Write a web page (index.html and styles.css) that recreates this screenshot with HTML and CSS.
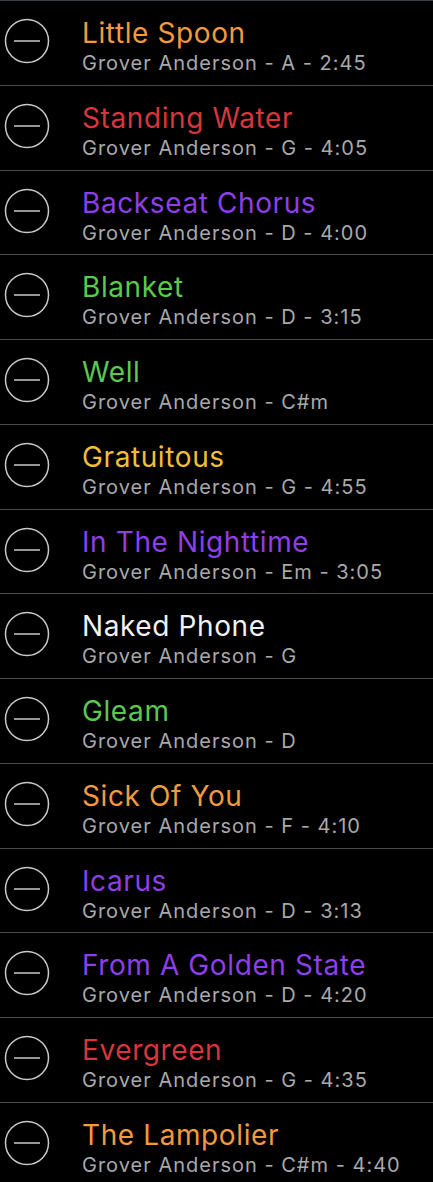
FILE: index.html
```html
<!DOCTYPE html>
<html lang="en">
<head>
    <meta charset="UTF-8">
    <meta name="viewport" content="width=device-width, initial-scale=1.0">
    <title>Setlist</title>
    <link rel="stylesheet" href="styles.css">
</head>
<body>
    <ul class="lista">
        <li class="linha"><svg class="remover" viewBox="0 0 46 46"><circle cx="23" cy="23" r="21.5"/><line x1="10" y1="23" x2="36" y2="23"/></svg><div class="info"><span class="titulo laranja">Little Spoon</span><span class="detalhe">Grover Anderson - A - 2:45</span></div></li>
        <li class="linha"><svg class="remover" viewBox="0 0 46 46"><circle cx="23" cy="23" r="21.5"/><line x1="10" y1="23" x2="36" y2="23"/></svg><div class="info"><span class="titulo vermelho">Standing Water</span><span class="detalhe">Grover Anderson - G - 4:05</span></div></li>
        <li class="linha"><svg class="remover" viewBox="0 0 46 46"><circle cx="23" cy="23" r="21.5"/><line x1="10" y1="23" x2="36" y2="23"/></svg><div class="info"><span class="titulo roxo">Backseat Chorus</span><span class="detalhe">Grover Anderson - D - 4:00</span></div></li>
        <li class="linha"><svg class="remover" viewBox="0 0 46 46"><circle cx="23" cy="23" r="21.5"/><line x1="10" y1="23" x2="36" y2="23"/></svg><div class="info"><span class="titulo verde">Blanket</span><span class="detalhe">Grover Anderson - D - 3:15</span></div></li>
        <li class="linha"><svg class="remover" viewBox="0 0 46 46"><circle cx="23" cy="23" r="21.5"/><line x1="10" y1="23" x2="36" y2="23"/></svg><div class="info"><span class="titulo verde">Well</span><span class="detalhe">Grover Anderson - C#m</span></div></li>
        <li class="linha"><svg class="remover" viewBox="0 0 46 46"><circle cx="23" cy="23" r="21.5"/><line x1="10" y1="23" x2="36" y2="23"/></svg><div class="info"><span class="titulo amarelo">Gratuitous</span><span class="detalhe">Grover Anderson - G - 4:55</span></div></li>
        <li class="linha"><svg class="remover" viewBox="0 0 46 46"><circle cx="23" cy="23" r="21.5"/><line x1="10" y1="23" x2="36" y2="23"/></svg><div class="info"><span class="titulo roxo">In The Nighttime</span><span class="detalhe">Grover Anderson - Em - 3:05</span></div></li>
        <li class="linha"><svg class="remover" viewBox="0 0 46 46"><circle cx="23" cy="23" r="21.5"/><line x1="10" y1="23" x2="36" y2="23"/></svg><div class="info"><span class="titulo branco">Naked Phone</span><span class="detalhe">Grover Anderson - G</span></div></li>
        <li class="linha"><svg class="remover" viewBox="0 0 46 46"><circle cx="23" cy="23" r="21.5"/><line x1="10" y1="23" x2="36" y2="23"/></svg><div class="info"><span class="titulo verde">Gleam</span><span class="detalhe">Grover Anderson - D</span></div></li>
        <li class="linha"><svg class="remover" viewBox="0 0 46 46"><circle cx="23" cy="23" r="21.5"/><line x1="10" y1="23" x2="36" y2="23"/></svg><div class="info"><span class="titulo laranja">Sick Of You</span><span class="detalhe">Grover Anderson - F - 4:10</span></div></li>
        <li class="linha"><svg class="remover" viewBox="0 0 46 46"><circle cx="23" cy="23" r="21.5"/><line x1="10" y1="23" x2="36" y2="23"/></svg><div class="info"><span class="titulo roxo">Icarus</span><span class="detalhe">Grover Anderson - D - 3:13</span></div></li>
        <li class="linha"><svg class="remover" viewBox="0 0 46 46"><circle cx="23" cy="23" r="21.5"/><line x1="10" y1="23" x2="36" y2="23"/></svg><div class="info"><span class="titulo roxo">From A Golden State</span><span class="detalhe">Grover Anderson - D - 4:20</span></div></li>
        <li class="linha"><svg class="remover" viewBox="0 0 46 46"><circle cx="23" cy="23" r="21.5"/><line x1="10" y1="23" x2="36" y2="23"/></svg><div class="info"><span class="titulo vermelho">Evergreen</span><span class="detalhe">Grover Anderson - G - 4:35</span></div></li>
        <li class="linha"><svg class="remover" viewBox="0 0 46 46"><circle cx="23" cy="23" r="21.5"/><line x1="10" y1="23" x2="36" y2="23"/></svg><div class="info"><span class="titulo laranja">The Lampolier</span><span class="detalhe">Grover Anderson - C#m - 4:40</span></div></li>
    </ul>
</body>
</html>
```

FILE: styles.css
```css
/* Página */
body {
    margin: 0;
    background-color: #000;
    font-family: Inter, "Noto Sans", sans-serif;
    overflow: hidden;
}

/* Lista de músicas */
.lista {
    list-style: none;
    margin: 0;
    padding: 0;
    border-top: 1px solid #3c434b;
}

.linha {
    display: flex;
    align-items: flex-start;
    box-sizing: border-box;
    height: 84.75px;
    border-bottom: 1px solid #4a4a4c;
    padding-left: 4px;
}

/* Botão de remover */
.remover {
    width: 46px;
    height: 46px;
    margin-top: 17px;
    flex-shrink: 0;
    fill: none;
    stroke: #c9c9c9;
    stroke-width: 1.5;
}

.info {
    display: flex;
    flex-direction: column;
    margin-left: 32px;
    padding-top: 16px;
}

.titulo {
    font-size: 28px;
    line-height: 32px;
    letter-spacing: 0.6px;
    margin-bottom: 1px;
    white-space: nowrap;
}

.detalhe {
    font-size: 20px;
    line-height: 26px;
    letter-spacing: 1px;
    color: #a9a9ab;
    white-space: nowrap;
}

/* Cores */
.laranja { color: #f29a40; }
.vermelho { color: #d8353d; }
.roxo { color: #8d3fe8; }
.verde { color: #5cc84e; }
.amarelo { color: #f2be37; }
.branco { color: #f2f2f2; }
```
